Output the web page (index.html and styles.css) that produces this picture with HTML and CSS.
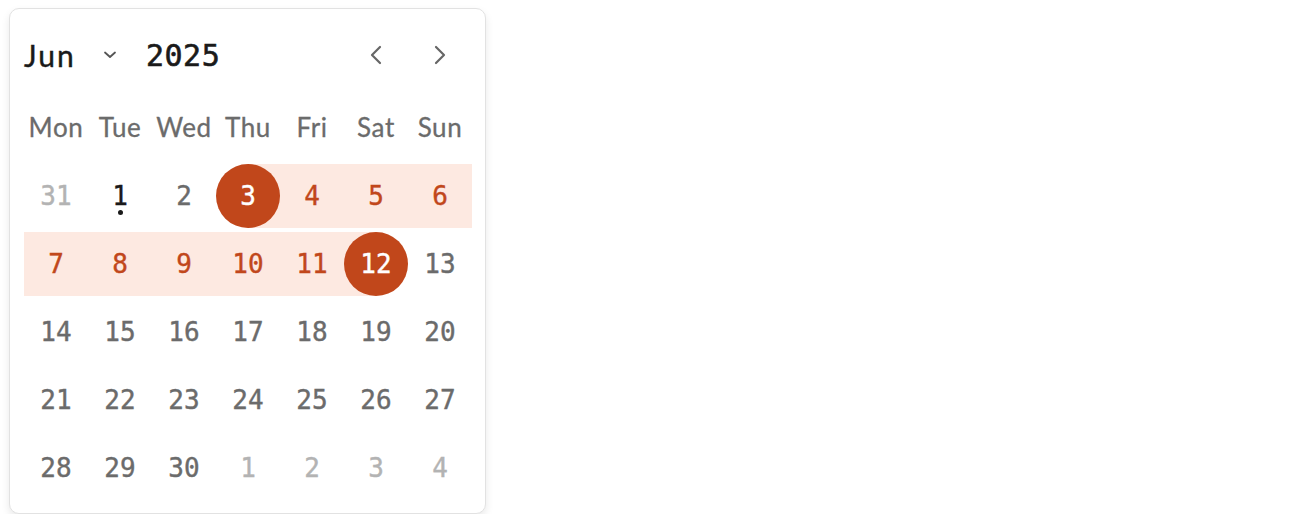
FILE: index.html
```html
<!DOCTYPE html>
<html lang="en">
<head>
<meta charset="utf-8">
<title>Calendar</title>
<link rel="stylesheet" href="styles.css">
</head>
<body>
<div class="calendar">
  <div class="header">
    <div class="month-select">
      <span class="month">Jun</span>
      <svg class="caret" width="14" height="8" viewBox="0 0 14 8"><path d="M2 1.5 L7 6 L12 1.5" fill="none" stroke="#555" stroke-width="1.8" stroke-linecap="round" stroke-linejoin="round"/></svg>
    </div>
    <span class="year">2025</span>
    <div class="nav">
      <button class="nav-btn" aria-label="Previous month"><svg width="14" height="20" viewBox="0 0 14 20"><path d="M11 2 L3 10 L11 18" fill="none" stroke="#666" stroke-width="2.2" stroke-linecap="round" stroke-linejoin="round"/></svg></button>
      <button class="nav-btn" aria-label="Next month"><svg width="14" height="20" viewBox="0 0 14 20"><path d="M3 2 L11 10 L3 18" fill="none" stroke="#666" stroke-width="2.2" stroke-linecap="round" stroke-linejoin="round"/></svg></button>
    </div>
  </div>
  <div class="weekdays">
    <span>Mon</span><span>Tue</span><span>Wed</span><span>Thu</span><span>Fri</span><span>Sat</span><span>Sun</span>
  </div>
  <div class="days">
    <div class="day outside"><span>31</span></div>
    <div class="day today"><span>1</span></div>
    <div class="day"><span>2</span></div>
    <div class="day range-start"><span>3</span></div>
    <div class="day in-range"><span>4</span></div>
    <div class="day in-range"><span>5</span></div>
    <div class="day in-range"><span>6</span></div>

    <div class="day in-range"><span>7</span></div>
    <div class="day in-range"><span>8</span></div>
    <div class="day in-range"><span>9</span></div>
    <div class="day in-range"><span>10</span></div>
    <div class="day in-range"><span>11</span></div>
    <div class="day range-end"><span>12</span></div>
    <div class="day"><span>13</span></div>

    <div class="day"><span>14</span></div>
    <div class="day"><span>15</span></div>
    <div class="day"><span>16</span></div>
    <div class="day"><span>17</span></div>
    <div class="day"><span>18</span></div>
    <div class="day"><span>19</span></div>
    <div class="day"><span>20</span></div>

    <div class="day"><span>21</span></div>
    <div class="day"><span>22</span></div>
    <div class="day"><span>23</span></div>
    <div class="day"><span>24</span></div>
    <div class="day"><span>25</span></div>
    <div class="day"><span>26</span></div>
    <div class="day"><span>27</span></div>

    <div class="day"><span>28</span></div>
    <div class="day"><span>29</span></div>
    <div class="day"><span>30</span></div>
    <div class="day outside"><span>1</span></div>
    <div class="day outside"><span>2</span></div>
    <div class="day outside"><span>3</span></div>
    <div class="day outside"><span>4</span></div>
  </div>
</div>
</body>
</html>
```
FILE: styles.css
```css
html, body {
  margin: 0;
  padding: 0;
  background: #ffffff;
}
body {
  padding: 8px 0 0 9px;
}
.calendar {
  box-sizing: border-box;
  width: 477px;
  height: 506px;
  border: 1px solid #e2e2e2;
  border-radius: 10px;
  background: #fff;
  box-shadow: 0 4px 8px rgba(0, 0, 0, 0.09);
  padding: 14px 13px 14px 14px;
}
.header {
  display: flex;
  align-items: center;
  height: 64px;
  margin-bottom: 8px;
}
.month-select {
  display: flex;
  align-items: center;
  width: 122px;
}
.month {
  font-family: Lato, "Open Sans", sans-serif;
  font-size: 30px;
  letter-spacing: 2px;
  color: #1a1a1a;
  width: 79px;
  -webkit-text-stroke: 0.4px #1a1a1a;
}
.caret {
  display: block;
}
.year {
  font-family: "DejaVu Sans Mono", monospace;
  font-size: 30px;
  color: #1a1a1a;
  letter-spacing: 0.5px;
  -webkit-text-stroke: 0.6px #1a1a1a;
}
.nav {
  margin-left: auto;
  display: flex;
}
.nav-btn {
  width: 64px;
  height: 64px;
  border: 0;
  background: transparent;
  padding: 0;
  display: flex;
  align-items: center;
  justify-content: center;
  cursor: pointer;
}
.nav-btn svg {
  display: block;
}
.weekdays {
  display: grid;
  grid-template-columns: repeat(7, 64px);
  height: 64px;
  margin-bottom: 5px;
  font-family: Lato, "Open Sans", sans-serif;
  font-size: 26px;
  letter-spacing: 0.6px;
  color: #6b6b6b;
  -webkit-text-stroke: 0.3px #6b6b6b;
}
.weekdays span {
  display: flex;
  align-items: center;
  justify-content: center;
}
.days {
  display: grid;
  grid-template-columns: repeat(7, 64px);
  grid-auto-rows: 64px;
  row-gap: 4px;
  font-family: "DejaVu Sans Mono", monospace;
  font-size: 26px;
  color: #6b6b6b;
}
.day {
  position: relative;
  display: flex;
  align-items: center;
  justify-content: center;
}
.day span {
  position: relative;
  z-index: 1;
  -webkit-text-stroke: 0.4px currentColor;
}
.day.outside {
  color: #b3b3b3;
}
.day.today {
  color: #1a1a1a;
}
.day.today::after {
  content: "";
  position: absolute;
  left: 30px;
  top: 46px;
  width: 5px;
  height: 5px;
  border-radius: 50%;
  background: #1a1a1a;
}
.day.in-range {
  background: #fde9e1;
  color: #c1471b;
}
.day.range-start,
.day.range-end {
  color: #ffffff;
}
.day.range-start {
  background: linear-gradient(to right, transparent 50%, #fde9e1 50%);
}
.day.range-end {
  background: linear-gradient(to right, #fde9e1 50%, transparent 50%);
}
.day.range-start::before,
.day.range-end::before {
  content: "";
  position: absolute;
  inset: 0;
  border-radius: 50%;
  background: #c1471b;
}
```
